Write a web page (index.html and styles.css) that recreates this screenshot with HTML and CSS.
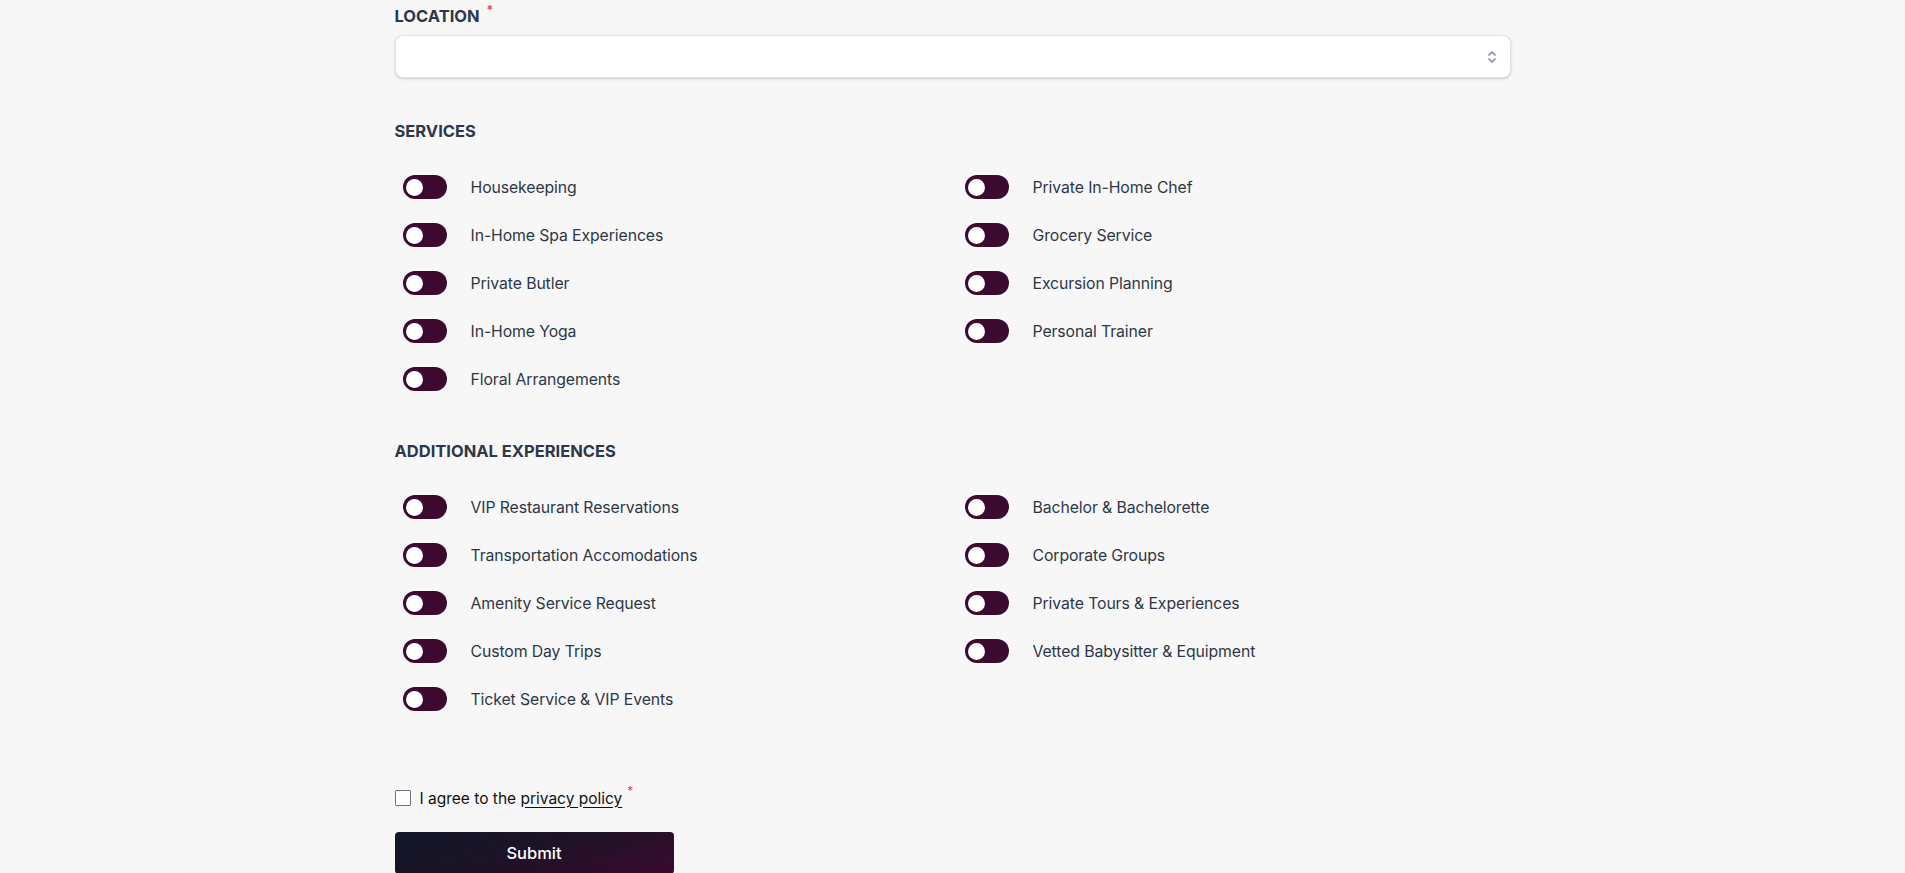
FILE: index.html
```html
<!DOCTYPE html>
<html lang="en">
<head>
<meta charset="utf-8">
<title>Form</title>
<link rel="stylesheet" href="styles.css">
</head>
<body>
<div class="page">
  <form class="form">
    <div class="field">
      <label class="label">LOCATION <span class="req">*</span></label>
      <div class="select">
        <svg class="chev" width="10" height="14" viewBox="0 0 10 14" fill="none" stroke="#9ca3af" stroke-width="1.8" stroke-linecap="round" stroke-linejoin="round"><path d="M2 5 L5 2 L8 5"/><path d="M2 9 L5 12 L8 9"/></svg>
      </div>
    </div>

    <section class="section">
      <h3 class="label">SERVICES</h3>
      <div class="grid">
        <div class="col">
          <div class="row"><span class="toggle"><span class="knob"></span></span><span class="txt">Housekeeping</span></div>
          <div class="row"><span class="toggle"><span class="knob"></span></span><span class="txt">In-Home Spa Experiences</span></div>
          <div class="row"><span class="toggle"><span class="knob"></span></span><span class="txt">Private Butler</span></div>
          <div class="row"><span class="toggle"><span class="knob"></span></span><span class="txt">In-Home Yoga</span></div>
          <div class="row"><span class="toggle"><span class="knob"></span></span><span class="txt">Floral Arrangements</span></div>
        </div>
        <div class="col">
          <div class="row"><span class="toggle"><span class="knob"></span></span><span class="txt">Private In-Home Chef</span></div>
          <div class="row"><span class="toggle"><span class="knob"></span></span><span class="txt">Grocery Service</span></div>
          <div class="row"><span class="toggle"><span class="knob"></span></span><span class="txt">Excursion Planning</span></div>
          <div class="row"><span class="toggle"><span class="knob"></span></span><span class="txt">Personal Trainer</span></div>
        </div>
      </div>
    </section>

    <section class="section">
      <h3 class="label">ADDITIONAL EXPERIENCES</h3>
      <div class="grid">
        <div class="col">
          <div class="row"><span class="toggle"><span class="knob"></span></span><span class="txt">VIP Restaurant Reservations</span></div>
          <div class="row"><span class="toggle"><span class="knob"></span></span><span class="txt">Transportation Accomodations</span></div>
          <div class="row"><span class="toggle"><span class="knob"></span></span><span class="txt">Amenity Service Request</span></div>
          <div class="row"><span class="toggle"><span class="knob"></span></span><span class="txt">Custom Day Trips</span></div>
          <div class="row"><span class="toggle"><span class="knob"></span></span><span class="txt">Ticket Service &amp; VIP Events</span></div>
        </div>
        <div class="col">
          <div class="row"><span class="toggle"><span class="knob"></span></span><span class="txt">Bachelor &amp; Bachelorette</span></div>
          <div class="row"><span class="toggle"><span class="knob"></span></span><span class="txt">Corporate Groups</span></div>
          <div class="row"><span class="toggle"><span class="knob"></span></span><span class="txt">Private Tours &amp; Experiences</span></div>
          <div class="row"><span class="toggle"><span class="knob"></span></span><span class="txt">Vetted Babysitter &amp; Equipment</span></div>
        </div>
      </div>
    </section>

    <div class="agree">
      <span class="checkbox"></span>
      <span class="agree-txt">I agree to the <a class="link">privacy policy</a></span>
      <span class="req req-agree">*</span>
    </div>

    <button type="button" class="submit">Submit</button>
  </form>
  <div class="footer-shadow"></div>
</div>
</body>
</html>
```

FILE: styles.css
```css
* { box-sizing: border-box; }
html, body {
  margin: 0;
  padding: 0;
  background: #f7f7f7;
  font-family: Inter, "Noto Sans", "Liberation Sans", sans-serif;
  overflow: hidden;
}
.page {
  height: 873px;
  overflow: hidden;
}
.form {
  width: 1116px;
  margin: 0 auto;
  padding-top: 4px;
}
.label {
  margin: 0;
  font-size: 16.5px;
  line-height: 24px;
  font-weight: 700;
  color: #2d3748;
}
.req {
  color: #ef4444;
  font-size: 12px;
  vertical-align: top;
  position: relative;
  top: -6px;
  margin-left: 3px;
}
.select {
  margin-top: 7px;
  height: 43px;
  background: #fff;
  border: 1px solid #e3e3e6;
  border-radius: 8px;
  box-shadow: 0 1px 3px rgba(0,0,0,0.14), 0 1px 2px rgba(0,0,0,0.06);
  display: flex;
  align-items: center;
  justify-content: flex-end;
  padding-right: 13px;
}
.section { margin-top: 41px; }
.section + .section { margin-top: 48px; }
.grid {
  margin-top: 32px;
  display: grid;
  grid-template-columns: 1fr 1fr;
  column-gap: 8px;
}
.col {
  display: flex;
  flex-direction: column;
  gap: 24px;
  padding-left: 8px;
}
.row {
  display: flex;
  align-items: center;
  height: 24px;
}
.toggle {
  width: 44px;
  height: 24px;
  border-radius: 12px;
  background: #3b0a2e;
  display: flex;
  align-items: center;
  padding-left: 3.5px;
  flex: none;
}
.knob {
  width: 17px;
  height: 17px;
  border-radius: 50%;
  background: #fff;
}
.txt {
  margin-left: 24px;
  font-size: 15.8px;
  letter-spacing: -0.1px;
  color: #2d3748;
}
.agree {
  margin-top: 75px;
  display: flex;
  align-items: center;
  height: 24px;
}
.checkbox {
  width: 16px;
  height: 16px;
  border: 1.5px solid #6b7280;
  background: #fff;
  border-radius: 1px;
  flex: none;
}
.agree-txt {
  margin-left: 9px;
  font-size: 15.5px;
  color: #111;
}
.link {
  color: #111;
  text-decoration: underline;
  text-underline-offset: 3px;
}
.req-agree {
  align-self: flex-start;
  top: -3px;
  margin-left: 5px;
}
.submit {
  display: block;
  margin-top: 22px;
  width: 279px;
  height: 42px;
  border: 0;
  border-radius: 4px;
  background: linear-gradient(160deg, #111827 0%, #1e1227 50%, #3b0a2e 100%);
  color: #fff;
  font-family: inherit;
  font-size: 16.5px;
  font-weight: 500;
}
.footer-shadow {
  width: 1580px;
  height: 80px;
  margin: 10px auto 0;
  background: #f7f7f7;
  box-shadow: 0 -6px 20px rgba(0,0,0,0.05);
  border-radius: 40px;
}
```
